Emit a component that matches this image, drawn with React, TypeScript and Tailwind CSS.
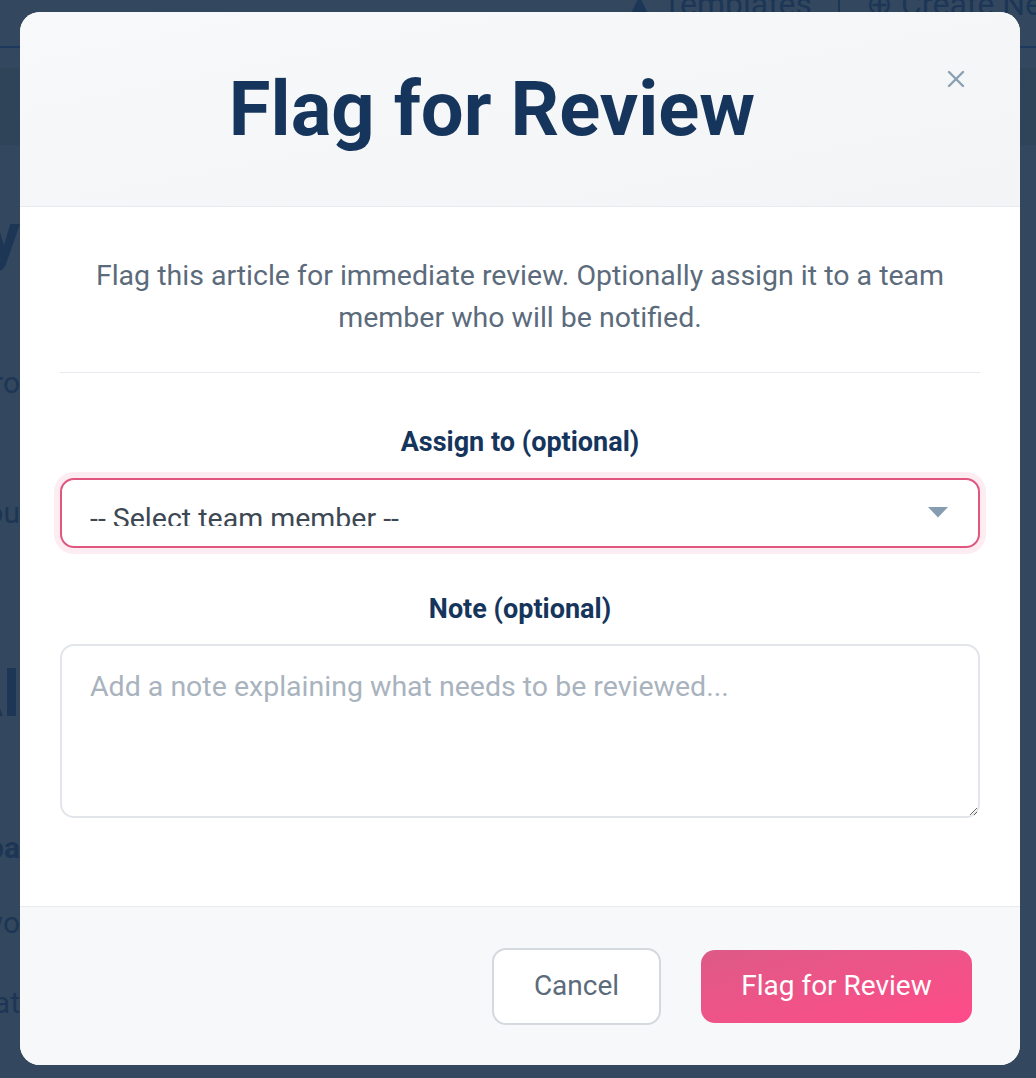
import { X } from "lucide-react";

const font = "font-['Roboto','Liberation_Sans',sans-serif]";

const SIDE_WORDS: { text: string; cls: string }[] = [
  { text: "Key", cls: "mt-[60px] h-[70px] text-[64px] font-bold" },
  { text: "Pro", cls: "mt-[93px] h-[40px] text-[30px]" },
  { text: "Abou", cls: "mt-[90px] h-[40px] text-[30px]" },
  { text: "Al", cls: "mt-[125px] h-[70px] text-[64px] font-bold" },
  { text: "pa", cls: "mt-[100px] h-[40px] text-[30px] font-bold" },
  { text: "wo", cls: "mt-[35px] h-[40px] text-[30px]" },
  { text: "Dat", cls: "mt-[40px] h-[40px] text-[30px]" },
];

function Backdrop() {
  return (
    <div className="flex h-full w-full flex-col">
      <div className="flex h-[48px] items-start justify-end gap-[26px] border-b-2 border-[#1d3a5e]">
        <span className="-mt-[12px] whitespace-nowrap text-[32px] leading-none text-[#1c3657]">▲ Templates</span>
        <span className="h-[18px] w-[2px] bg-[#1c3657]" />
        <span className="-mr-[30px] -mt-[12px] whitespace-nowrap text-[32px] leading-none text-[#1c3657]">
          ⊕ Create New
        </span>
      </div>
      <div className="mt-[20px] h-[77px] bg-[#2f4459]" />
      <div className="flex w-[20px] flex-col items-end overflow-hidden">
        {SIDE_WORDS.map((w) => (
          <span
            key={w.text}
            className={`whitespace-nowrap leading-none text-[#1d3655] ${w.cls}`}
          >
            {w.text}
          </span>
        ))}
      </div>
    </div>
  );
}

export default function App() {
  return (
    <div className={`relative h-[1078px] w-full overflow-hidden bg-[#33485e] ${font}`}>
      <Backdrop />

      <div className="absolute inset-0 flex items-start justify-center pl-[4px] pt-[12px]">
        <div className="flex w-[1000px] flex-col overflow-hidden rounded-[20px] bg-white">
          {/* header */}
          <div className="relative flex h-[195px] items-center justify-center border-b border-[#e7eaee] bg-gradient-to-br from-[#f8f9fa] to-[#f3f4f5] pr-[56px]">
            <h2 className="text-[76px] font-bold leading-none text-[#16355c]">Flag for Review</h2>
            <button
              type="button"
              aria-label="Close"
              className="absolute right-[50px] top-[53px] flex h-[28px] w-[28px] items-center justify-center text-[#8aa0b3]"
            >
              <X size={30} strokeWidth={2.1} />
            </button>
          </div>

          {/* body */}
          <div className="flex flex-col px-[40px] pb-[88px] pt-[48px]">
            <p className="border-b border-[#e7eaee] pb-[33px] text-center text-[28.5px] leading-[42px] text-[#5b6b7c]">
              Flag this article for immediate review. Optionally assign it to a team member who will be
              notified.
            </p>

            <label className="mt-[51px] text-center text-[27px] font-bold leading-[36px] text-[#16355c]">
              Assign to (optional)
            </label>
            <div className="mt-[18px] flex h-[70px] items-center justify-between rounded-[14px] border-2 border-[#e0567f] bg-white pl-[28px] pr-[30px] shadow-[0_0_0_6px_#fdecf1]">
              <div className="mt-[18px] h-[28px] self-start overflow-hidden pt-[3px]">
                <span className="block text-[28.5px] leading-[36px] text-[#3d4853]">
                  -- Select team member --
                </span>
              </div>
              <svg width="20" height="11" viewBox="0 0 20 11" className="mb-[1px]">
                <path d="M0 0 L20 0 L10 10.5 Z" fill="#869cb0" />
              </svg>
            </div>

            <label className="mt-[43px] text-center text-[27px] font-bold leading-[36px] text-[#16355c]">
              Note (optional)
            </label>
            <textarea
              placeholder="Add a note explaining what needs to be reviewed..."
              className="mt-[17px] h-[174px] w-full rounded-[14px] border-2 border-[#e2e6eb] bg-white px-[28px] pt-[23px] text-[28.5px] leading-[36px] text-[#3d4853] outline-none placeholder:text-[#a9b3be]"
            />
          </div>

          {/* footer */}
          <div className="flex h-[159px] items-center justify-end gap-[40px] border-t border-[#e7eaee] bg-[#f7f8fa] pr-[48px]">
            <button
              type="button"
              className="h-[77px] w-[169px] rounded-[14px] border-2 border-[#d4d9df] bg-white text-[28px] text-[#5b6b7c]"
            >
              Cancel
            </button>
            <button
              type="button"
              className="h-[73px] w-[271px] rounded-[14px] bg-gradient-to-br from-[#dd5a86] to-[#ff4b89] text-[28px] text-white"
            >
              Flag for Review
            </button>
          </div>
        </div>
      </div>
    </div>
  );
}
